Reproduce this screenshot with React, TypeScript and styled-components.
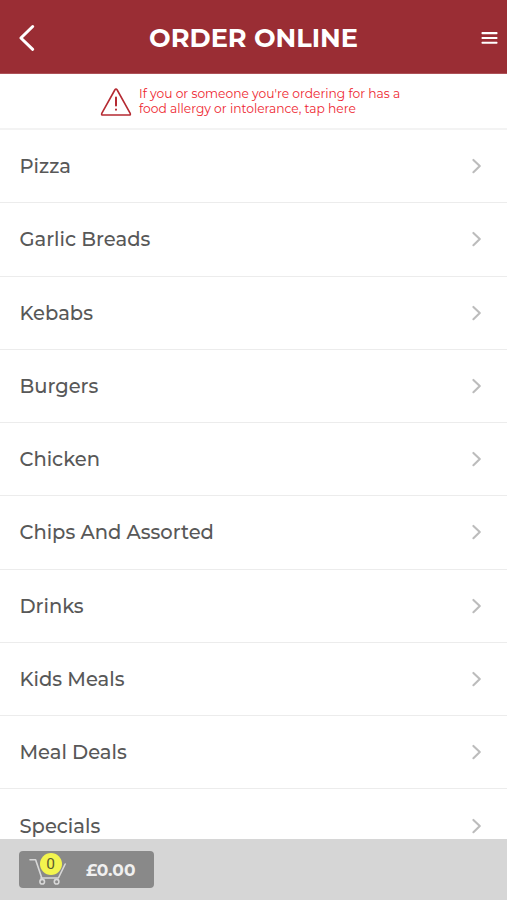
import React from "react";
import styled, { createGlobalStyle } from "styled-components";

const GlobalStyle = createGlobalStyle`
  * { box-sizing: border-box; }
  body {
    margin: 0;
    background: #fff;
    font-family: Montserrat, Inter, sans-serif;
    overflow: hidden;
  }
  button { font: inherit; border: 0; padding: 0; background: none; }
`;

const Screen = styled.div`
  display: flex;
  flex-direction: column;
  width: 100%;
  height: 100vh;
  overflow: hidden;
`;

const Header = styled.header`
  display: grid;
  grid-template-columns: 60px 1fr 60px;
  align-items: center;
  flex: none;
  height: 74px;
  padding-top: 2px;
  background: #9a2d34;
  color: #fff;
  border-bottom: 1px solid #ad5157;
`;

const BackButton = styled.button`
  display: flex;
  padding-left: 18px;
`;

const MenuButton = styled.button`
  display: flex;
  justify-content: flex-end;
  padding-right: 9px;
`;

const Title = styled.h1`
  margin: 0;
  text-align: center;
  font-size: 25.6px;
  font-weight: 700;
  line-height: 32px;
  white-space: nowrap;
`;

const AllergyNotice = styled.button`
  display: flex;
  flex: none;
  gap: 7px;
  height: 56px;
  padding: 12px 0 0 100px;
  border-bottom: 2px solid #f3f3f3;
  text-align: left;
`;

const NoticeText = styled.span`
  color: #ee2630;
  font-size: 12.25px;
  line-height: 15px;
  white-space: nowrap;
`;

const MenuList = styled.ul`
  flex: 1;
  min-height: 0;
  margin: 0;
  padding: 0;
  list-style: none;
  overflow: hidden;
`;

const MenuRow = styled.li`
  display: flex;
  align-items: center;
  justify-content: space-between;
  height: 73.27px;
  padding: 0 25px 0 19.5px;
  border-bottom: 1.5px solid #ececec;
  color: #585858;
  font-size: 19.5px;
  font-weight: 500;
`;

const Footer = styled.footer`
  display: flex;
  flex: none;
  height: 61px;
  padding: 12px 19px;
  background: #d6d6d6;
`;

const BasketButton = styled.button`
  display: flex;
  align-items: center;
  width: 135px;
  height: 37px;
  padding-left: 10px;
  border-radius: 4px;
  background: #898989;
`;

const BasketIcon = styled.span`
  position: relative;
  display: flex;
  width: 38px;
  height: 37px;
`;

const Count = styled.span`
  position: absolute;
  left: 10.5px;
  top: 2px;
  width: 22px;
  height: 22px;
  border-radius: 50%;
  background: #f3f54e;
  color: #5c5c30;
  font-family: Roboto, sans-serif;
  font-size: 15.5px;
  font-weight: 400;
  line-height: 22px;
  text-align: center;
`;

const Total = styled.span`
  margin-left: 19px;
  color: #f0f0f0;
  font-size: 17px;
  font-weight: 700;
`;

const categories = [
  "Pizza",
  "Garlic Breads",
  "Kebabs",
  "Burgers",
  "Chicken",
  "Chips And Assorted",
  "Drinks",
  "Kids Meals",
  "Meal Deals",
  "Specials",
];

function BackArrow() {
  return (
    <svg width="18" height="28" viewBox="0 0 18 28" fill="none" stroke="#fff" strokeWidth="3" strokeLinecap="round" strokeLinejoin="round">
      <path d="M14.7 2.5 2.9 14l11.8 11.3" />
    </svg>
  );
}

function MenuIcon() {
  return (
    <svg width="17" height="14" viewBox="0 0 17 14" fill="#fff">
      <rect x="0.5" y="1" width="16" height="2.2" rx="0.7" />
      <rect x="0.5" y="6" width="16" height="2" rx="0.7" />
      <rect x="0.5" y="10.8" width="16" height="2" rx="0.7" />
    </svg>
  );
}

function WarningIcon() {
  return (
    <svg width="32" height="30" viewBox="0 0 32 30" fill="none" stroke="#b52a32" strokeWidth="1.6" strokeLinejoin="round" strokeLinecap="round">
      <path d="M14.8 4 1.9 27.2Q1 29 2.8 29H29.2Q31 29 30.1 27.2L17.2 4Q16 2.1 14.8 4Z" />
      <path d="M16 11.5v8M16 23.6v.2" strokeWidth="2" />
    </svg>
  );
}

function Chevron() {
  return (
    <svg width="11" height="16" viewBox="0 0 11 16" fill="none" stroke="#bcbcbc" strokeWidth="2.1" strokeLinecap="round" strokeLinejoin="round">
      <path d="M2.4 1.9 8.8 8 2.4 14.2" />
    </svg>
  );
}

function Cart() {
  return (
    <svg width="38" height="37" viewBox="0 0 38 37" fill="none" stroke="#d8d8d8" strokeWidth="1.6" strokeLinecap="round" strokeLinejoin="round">
      <path d="M1 8.8h5.6L13 27.6M11.8 27h17.6L36.2 13" />
      <circle cx="13.2" cy="30.7" r="2.3" />
      <circle cx="27.6" cy="30.7" r="2.3" />
    </svg>
  );
}

export default function App() {
  return (
    <>
      <GlobalStyle />
      <Screen>
        <Header>
          <BackButton aria-label="Back">
            <BackArrow />
          </BackButton>
          <Title>ORDER ONLINE</Title>
          <MenuButton aria-label="Menu">
            <MenuIcon />
          </MenuButton>
        </Header>
        <AllergyNotice>
          <WarningIcon />
          <NoticeText>
            If you or someone you're ordering for has a
            <br />
            food allergy or intolerance, tap here
          </NoticeText>
        </AllergyNotice>
        <MenuList>
          {categories.map((name) => (
            <MenuRow key={name}>
              {name}
              <Chevron />
            </MenuRow>
          ))}
        </MenuList>
        <Footer>
          <BasketButton>
            <BasketIcon>
              <Cart />
              <Count>0</Count>
            </BasketIcon>
            <Total>£0.00</Total>
          </BasketButton>
        </Footer>
      </Screen>
    </>
  );
}
